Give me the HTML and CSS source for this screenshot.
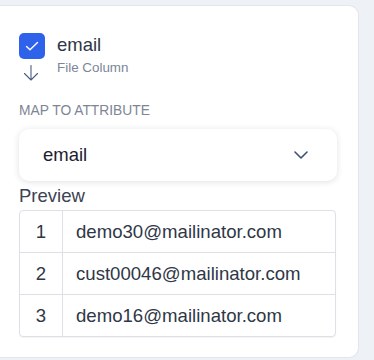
FILE: index.html
```html
<!DOCTYPE html>
<html>

<head>
    <link rel="stylesheet" href="styles.css">
</head>

<body>

    <div class="map-card">
        <div class="field-head">
            <div class="field-icons">
                <span class="check-box">
                    <svg width="26" height="26" viewBox="0 0 26 26">
                        <path d="M7.5 13.5 L11 16.8 L18.5 9.5" fill="none" stroke="#fff" stroke-width="1.4"
                            stroke-linecap="round" stroke-linejoin="round" />
                    </svg>
                </span>
                <svg class="down-arrow" width="16" height="16" viewBox="0 0 16 16">
                    <path d="M8 0.5 V15 M1.5 8.5 L8 15 L14.5 8.5" fill="none" stroke="#4a5f85" stroke-width="1.1"
                        stroke-linecap="round" stroke-linejoin="round" />
                </svg>
            </div>
            <div class="field-text">
                <div class="field-name">email</div>
                <div class="field-sub">File Column</div>
            </div>
        </div>

        <div class="map-label">MAP TO ATTRIBUTE</div>

        <div class="attr-select">
            <span class="attr-value">email</span>
            <svg width="14" height="8" viewBox="0 0 14 8">
                <path d="M1 1 L7 7 L13 1" fill="none" stroke="#3d5177" stroke-width="1.6" stroke-linecap="round"
                    stroke-linejoin="round" />
            </svg>
        </div>

        <div class="preview-title">Preview</div>
        <div class="preview-table">
            <div class="preview-row">
                <div class="row-num">1</div>
                <div class="row-val">demo30@mailinator.com</div>
            </div>
            <div class="preview-row">
                <div class="row-num">2</div>
                <div class="row-val">cust00046@mailinator.com</div>
            </div>
            <div class="preview-row">
                <div class="row-num">3</div>
                <div class="row-val">demo16@mailinator.com</div>
            </div>
        </div>
    </div>

</body>

</html>
```

FILE: styles.css
```css
body {
    margin: 0;
    padding-top: 5px;
    background: #eef1f5;
    font-family: "Liberation Sans", Arial, sans-serif;
}

.map-card {
    width: 318px;
    padding: 27px 21px 20px 19px;
    background: #fff;
    border: 1px solid #e2e6eb;
    border-left: none;
    border-radius: 0 10px 10px 0;
}

/* 字段头部 */
.field-head {
    display: flex;
    gap: 12px;
}

.field-icons {
    display: flex;
    flex-direction: column;
    align-items: center;
    width: 26px;
}

.check-box {
    display: block;
    width: 26px;
    height: 26px;
    border-radius: 5px;
    background: #2e62ea;
}

.check-box svg {
    display: block;
}

.down-arrow {
    display: block;
    margin-top: 6px;
    margin-left: -2px;
}

.field-text {
    padding-top: 1px;
}

.field-name {
    font-size: 18.5px;
    line-height: 22px;
    color: #2d3648;
}

.field-sub {
    margin-top: 4px;
    font-size: 13.4px;
    line-height: 16px;
    color: #7c8698;
}

.map-label {
    margin-top: 22px;
    font-size: 13.8px;
    line-height: 15px;
    color: #7d8696;
}

/* 下拉选择 */
.attr-select {
    margin-top: 11px;
    width: 318px;
    height: 52px;
    padding: 0 29px 0 24px;
    box-sizing: border-box;
    display: flex;
    align-items: center;
    justify-content: space-between;
    background: #fff;
    border-radius: 10px;
    box-shadow: 0 1px 6px rgba(30, 40, 60, 0.14);
}

.attr-value {
    font-size: 18.5px;
    color: #1b2130;
}

.attr-select svg {
    display: block;
}

.preview-title {
    margin-top: 4px;
    font-size: 18.5px;
    line-height: 21px;
    color: #3c4352;
}

/* 预览表格 */
.preview-table {
    margin-top: 4px;
    width: 317px;
    border: 1px solid #dde0e5;
    border-radius: 4px;
    box-sizing: border-box;
    box-shadow: 0 1px 1px rgba(0, 0, 0, 0.05);
}

.preview-row {
    display: flex;
    height: 41px;
    font-size: 18.6px;
    color: #2f3747;
}

.preview-row + .preview-row {
    border-top: 1px solid #dde0e5;
}

.row-num {
    width: 42px;
    border-right: 1px solid #dde0e5;
    display: flex;
    align-items: center;
    justify-content: center;
}

.row-val {
    display: flex;
    align-items: center;
    padding-left: 13px;
}
```
